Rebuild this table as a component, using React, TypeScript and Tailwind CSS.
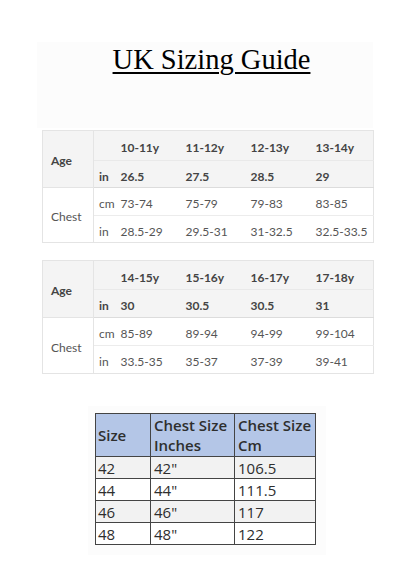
import React from 'react'

type AgeTable = {
  ages: string[]
  inches: string[]
  cm: string[]
  chestIn: string[]
  rowH: [string, string, string, string]
}

const tables: AgeTable[] = [
  {
    ages: ['10-11y', '11-12y', '12-13y', '13-14y'],
    inches: ['26.5', '27.5', '28.5', '29'],
    cm: ['73-74', '75-79', '79-83', '83-85'],
    chestIn: ['28.5-29', '29.5-31', '31-32.5', '32.5-33.5'],
    rowH: ['h-[30px]', 'h-[27px]', 'h-[28px]', 'h-[27px]'],
  },
  {
    ages: ['14-15y', '15-16y', '16-17y', '17-18y'],
    inches: ['30', '30.5', '30.5', '31'],
    cm: ['85-89', '89-94', '94-99', '99-104'],
    chestIn: ['33.5-35', '35-37', '37-39', '39-41'],
    rowH: ['h-[29px]', 'h-[28px]', 'h-[28px]', 'h-[28px]'],
  },
]

const mensSizes = [
  { size: '42', inches: '42"', cm: '106.5' },
  { size: '44', inches: '44"', cm: '111.5' },
  { size: '46', inches: '46"', cm: '117' },
  { size: '48', inches: '48"', cm: '122' },
]

function AgeChart({ data }: { data: AgeTable }) {
  const cell = 'pl-[5px] pt-[5px] align-middle text-left'
  return (
    <table className="table-fixed border-collapse w-[331px] border border-[#e4e4e4] text-[12px] font-['Lato',sans-serif] text-[#555]">
      <colgroup>
        <col className="w-[51px]" />
        <col className="w-[22px]" />
        <col className="w-[65px]" />
        <col className="w-[65px]" />
        <col className="w-[65px]" />
        <col className="w-[63px]" />
      </colgroup>
      <tbody>
        <tr className={`${data.rowH[0]} bg-[#f4f4f4] font-bold text-[#444]`}>
          <td rowSpan={2} className="pl-[8px] pt-[4px] align-middle border-r border-b border-[#e4e4e4]">
            Age
          </td>
          <td className={cell} />
          {data.ages.map((a) => (
            <td key={a} className={cell}>
              {a}
            </td>
          ))}
        </tr>
        <tr className={`${data.rowH[1]} bg-[#f4f4f4] font-bold text-[#444] border-t border-[#e9e9e9] border-b border-b-[#dcdcdc]`}>
          <td className={cell}>in</td>
          {data.inches.map((v, i) => (
            <td key={i} className={cell}>
              {v}
            </td>
          ))}
        </tr>
        <tr className={`${data.rowH[2]} bg-white`}>
          <td rowSpan={2} className="pl-[8px] pt-[4px] align-middle border-r border-[#e4e4e4]">
            Chest
          </td>
          <td className={cell}>cm</td>
          {data.cm.map((v, i) => (
            <td key={i} className={cell}>
              {v}
            </td>
          ))}
        </tr>
        <tr className={`${data.rowH[3]} bg-white border-t border-[#ececec]`}>
          <td className={cell}>in</td>
          {data.chestIn.map((v, i) => (
            <td key={i} className={cell}>
              {v}
            </td>
          ))}
        </tr>
      </tbody>
    </table>
  )
}

function MensChart() {
  return (
    <table className="table-fixed border-collapse w-[220px] border border-[#444] text-[15px] leading-[20px] font-['Open_Sans',sans-serif] text-[#2e2e2e]">
      <colgroup>
        <col className="w-[55px]" />
        <col className="w-[84px]" />
        <col className="w-[81px]" />
      </colgroup>
      <thead>
        <tr className="h-[43px] bg-[#b4c6e7] text-left">
          <th className="pl-[2px] align-middle border border-[#444] font-semibold">Size</th>
          <th className="pl-[3px] align-middle border border-[#444] font-semibold">
            Chest Size
            <br />
            Inches
          </th>
          <th className="pl-[3px] align-middle border border-[#444] font-semibold">
            Chest Size
            <br />
            Cm
          </th>
        </tr>
      </thead>
      <tbody>
        {mensSizes.map((row, i) => (
          <tr key={row.size} className={`h-[22px] ${i % 2 === 0 ? 'bg-[#f2f2f2]' : 'bg-white'}`}>
            <td className="pl-[2px] border border-[#444]">{row.size}</td>
            <td className="pl-[3px] border border-[#444]">{row.inches}</td>
            <td className="pl-[3px] border border-[#444]">{row.cm}</td>
          </tr>
        ))}
      </tbody>
    </table>
  )
}

export default function App() {
  return (
    <div className="w-[416px] h-[588px] bg-white flex flex-col overflow-hidden">
      {/* faint scan backdrop behind the title */}
      <div className="mt-[42px] ml-[37px] w-[336px] h-[86px] bg-[#fcfcfc] flex justify-center pl-[13px]">
        <h1 className="mt-[4px] text-[28.5px] leading-[28px] font-['Liberation_Serif',serif] text-black underline decoration-[1.5px] underline-offset-[3px]">
          UK Sizing Guide
        </h1>
      </div>

      <div className="ml-[42px] mt-[2px]">
        <AgeChart data={tables[0]} />
      </div>
      <div className="ml-[42px] mt-[17px]">
        <AgeChart data={tables[1]} />
      </div>

      <div className="mt-[32px] ml-[88px] w-[238px] h-[149px] bg-[#fcfcfc] pt-[7px] pl-[7px]">
        <MensChart />
      </div>
    </div>
  )
}
